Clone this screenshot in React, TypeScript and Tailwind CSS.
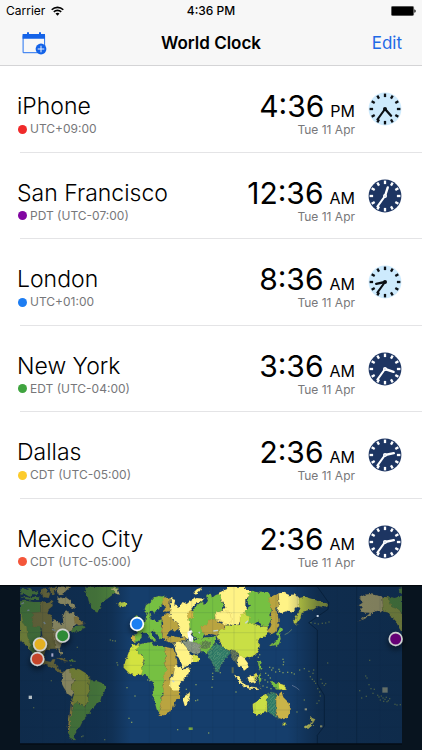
import React from "react";

type City = {
  name: string;
  zone: string;
  time: string;
  period: "AM" | "PM";
  dot: string;
  day: boolean;
};

const cities: City[] = [
  { name: "iPhone", zone: "UTC+09:00", time: "4:36", period: "PM", dot: "bg-[#f02a2a]", day: true },
  { name: "San Francisco", zone: "PDT (UTC-07:00)", time: "12:36", period: "AM", dot: "bg-[#8206a2]", day: false },
  { name: "London", zone: "UTC+01:00", time: "8:36", period: "AM", dot: "bg-[#1d7df2]", day: true },
  { name: "New York", zone: "EDT (UTC-04:00)", time: "3:36", period: "AM", dot: "bg-[#3fa43f]", day: false },
  { name: "Dallas", zone: "CDT (UTC-05:00)", time: "2:36", period: "AM", dot: "bg-[#fccb2c]", day: false },
  { name: "Mexico City", zone: "CDT (UTC-05:00)", time: "2:36", period: "AM", dot: "bg-[#f4563a]", day: false },
];

const ticks = Array.from({ length: 12 }, (_, i) => i * 30);

function Clock({ time, day }: { time: string; day: boolean }) {
  const [h, m] = time.split(":").map(Number);
  const ink = day ? "#0b0f14" : "#ffffff";
  return (
    <svg viewBox="-17 -17 34 34" className="h-[34px] w-[34px] shrink-0" aria-hidden="true">
      <circle r="16.4" fill={day ? "#cdeafd" : "#1d3562"} />
      {ticks.map((a) => (
        <line key={a} y1="-15.4" y2="-11.9" stroke={ink} strokeWidth="2.3" transform={`rotate(${a})`} />
      ))}
      <line y1="0" y2="-9" stroke={ink} strokeWidth="2.4" strokeLinecap="round" transform={`rotate(${(h % 12) * 30 + m / 2})`} />
      <line y1="0" y2="-13" stroke={ink} strokeWidth="2.1" strokeLinecap="round" transform={`rotate(${m * 6})`} />
      <circle r="2" fill={ink} />
      <circle r="0.6" fill={day ? "#0b0f14" : "#8fa0bd"} />
    </svg>
  );
}

// Land areas: [fill, outline]
const land: [string, string][] = [
  // North America
  ["#6fb545", "M60 64 L78 62 100 66 122 66 122 200 132 218 130 238 120 250 104 232 92 214 82 196 70 190 60 160Z"],
  ["#c9d845", "M60 98 L66 110 70 128 80 140 82 168 88 186 92 210 76 192 64 184 60 168Z"],
  ["#6fb545", "M60 30 L70 24 78 30 90 26 96 34 112 32 118 40 112 46 98 42 88 50 74 42 62 44Z"],
  ["#6fb545", "M62 48 L74 50 88 54 100 50 118 52 116 60 98 60 78 58Z"],
  ["#ac9f44", "M122 66 L156 62 158 78 146 88 142 104 156 110 158 144 168 150 168 206 152 206 136 212 130 228 136 242 152 246 158 238 166 238 162 250 172 254 176 268 190 276 186 280 170 274 158 262 140 256 122 250 100 236 110 200 128 176 124 142 98 140 98 98 122 96Z"],
  ["#f0df8c", "M172 66 L172 52 184 56 196 50 212 62 224 74 228 86 212 80 200 74 190 72 182 72Z"],
  ["#f0df8c", "M162 118 L176 124 184 136 190 126 188 112 194 96 204 94 212 100 220 96 226 106 236 112 240 124 222 138 216 150 206 156 198 172 186 190 180 204 188 222 182 224 174 206 166 204 162 150 156 144Z"],
  ["#d9b94e", "M222 110 L234 112 242 122 254 132 236 136 224 128Z"],
  ["#6fb545", "M214 148 L228 138 244 136 260 142 248 146 240 156 228 154 218 158Z"],
  ["#e7d57f", "M172 20 L214 20 204 30 194 32 190 44 178 46 172 40Z"],
  ["#ac9f44", "M124 28 L138 24 144 30 138 36 150 42 146 54 134 52 124 46Z"],
  ["#ac9f44", "M148 22 L168 20 168 34 158 32 164 44 154 42 150 32Z"],
  ["#6fb545", "M256 20 L356 20 348 32 338 44 322 56 306 66 300 80 292 98 282 92 272 78 266 62 262 46 256 36Z"],
  ["#e7e78a", "M334 28 L344 22 356 26 352 34 356 44 346 40 340 42 344 34Z"],
  ["#c9e04a", "M352 72 L362 68 374 66 382 72 376 80 360 82Z"],
  // Caribbean
  ["#ac9f44", "M172 234 L186 234 204 244 196 244 182 239Z"],
  ["#6fb545", "M202 240 L216 240 226 244 214 247Z"],
  // South America
  ["#efdf8a", "M200 268 L212 266 222 276 218 290 224 304 216 318 220 336 216 350 204 342 192 324 184 308 186 290 192 276Z"],
  ["#c2cc3c", "M206 268 L218 264 238 268 258 280 270 296 266 314 270 332 262 346 264 366 252 382 242 370 230 368 220 384 216 362 222 342 216 326 218 312 224 302 216 290Z"],
  ["#6fb545", "M268 290 L272 300 288 302 304 308 318 320 312 338 304 350 300 366 286 376 276 388 266 402 256 412 248 424 240 440 230 450 226 462 220 470 228 480 216 480 206 468 204 446 210 416 214 390 222 372 232 366 246 374 254 382 264 366 262 346 270 332 266 312Z"],
  ["#e0c94e", "M214 362 L218 370 213 400 209 440 207 460 203 446 208 410Z"],
  // Europe
  ["#76c043", "M438 112 L444 100 434 88 438 76 452 66 464 52 478 48 494 50 490 68 478 80 476 96 466 104 458 92 448 96 450 106 456 120 470 124 486 118 484 132 488 146 486 164 490 172 478 178 472 162 460 152 452 156 462 172 468 180 458 184 448 168 438 158 426 160 424 174 414 184 400 186 398 168 410 166 414 154 404 146 416 142 424 128 436 122Z"],
  ["#76c043", "M406 106 L414 108 418 124 424 138 408 142 404 128Z"],
  ["#d2b746", "M396 166 L404 168 403 186 396 184Z"],
  ["#b9a440", "M486 56 L500 50 510 56 508 76 512 92 500 96 492 92 498 78 488 72Z"],
  ["#b9a440", "M484 112 L498 100 510 106 516 118 528 128 540 138 534 150 522 158 508 156 500 166 506 176 494 180 488 172 486 150 490 130Z"],
  ["#b9a440", "M502 176 L516 168 536 172 554 170 558 178 550 184 530 186 512 188 504 184Z"],
  ["#fff386", "M510 54 L526 60 522 76 538 80 548 66 560 72 570 64 590 54 614 56 610 66 594 66 582 76 570 92 566 112 572 130 568 150 574 166 562 178 552 168 540 162 536 150 542 138 524 124 508 108 510 92 514 74Z"],
  ["#fff386", "M580 40 L590 28 606 22 600 32 588 44Z"],
  // Asia
  ["#76c043", "M560 98 L580 92 588 78 604 66 616 74 624 62 618 46 632 38 636 54 646 46 662 40 662 62 670 78 668 90 650 98 644 112 654 124 636 136 624 150 616 156 608 172 590 178 578 166 570 146 566 120Z"],
  ["#d2b746", "M558 98 L576 94 580 102 578 114 564 114Z"],
  ["#fff386", "M656 38 L680 28 684 20 734 20 738 30 752 30 746 50 736 58 736 80 742 92 724 112 716 134 700 136 684 130 672 138 664 126 652 122 644 110 652 98 668 92 676 82 666 64Z"],
  ["#fff386", "M644 100 L664 92 690 98 694 120 690 138 668 124 648 118Z"],
  ["#b9a440", "M602 142 L620 136 628 120 644 118 660 128 674 136 672 150 656 154 652 166 630 162 616 168Z"],
  ["#76c043", "M746 40 L756 32 774 38 806 38 812 48 828 52 810 70 816 90 808 104 812 122 802 140 782 136 776 122 760 134 742 130 748 112 732 104 736 90 750 78 740 62 746 52Z"],
  ["#c9df45", "M652 170 L656 154 674 148 676 136 704 138 720 134 720 104 738 98 736 106 752 110 746 128 766 132 782 138 802 140 806 156 796 168 780 174 770 182 780 194 776 208 768 222 752 232 738 230 728 238 718 224 704 220 690 212 670 206 662 192Z"],
  ["#b9a440", "M806 52 L822 46 836 40 836 80 828 84 832 102 836 120 834 140 826 156 812 164 804 150 812 140 816 120 810 110 816 98 818 90 810 74Z"],
  ["#fff386", "M836 40 L852 38 870 46 886 42 898 54 896 68 902 80 888 86 884 96 862 92 842 100 832 92 838 72Z"],
  ["#c9d845", "M898 54 L914 50 934 56 958 64 976 70 984 76 970 82 954 78 942 88 926 90 906 96 900 118 888 134 880 130 886 112 896 98 902 82 894 72Z"],
  ["#76c043", "M556 182 L572 178 590 180 608 172 624 172 642 170 652 172 646 184 640 196 632 212 620 222 606 216 600 202 584 192Z"],
  ["#fff386", "M522 192 L532 184 548 188 560 202 570 222 580 232 592 240 576 250 550 264 544 250 534 230 526 210Z"],
  ["#d9e24a", "M576 228 L588 226 598 236 590 248 580 246 584 238Z"],
  ["#fff386", "M710 234 L722 226 734 236 744 250 740 266 732 272 724 258 714 260Z"],
  ["#76c043", "M808 196 L824 188 834 178 832 158 840 142 846 148 840 162 842 176 838 190 830 202 826 194 812 198Z"],
  // South-east Asia
  ["#fff386", "M704 282 L716 290 728 306 736 318 762 321 784 325 770 327 748 326 730 320 714 300Z"],
  ["#fff386", "M742 292 L756 288 768 280 770 292 764 306 750 310Z"],
  ["#d9e24a", "M758 288 L770 278 768 296 764 304Z"],
  ["#76c043", "M776 290 L782 282 784 300 780 314 776 302Z"],
  ["#76c043", "M774 244 L782 242 780 256 788 268 782 274 776 260Z"],
  ["#76c043", "M810 306 L824 308 838 310 846 318 838 328 820 320Z"],
  ["#d9e24a", "M836 310 L850 314 860 326 846 328 836 322Z"],
  // Africa
  ["#76c043", "M418 194 L440 188 456 186 464 198 480 198 494 198 498 226 492 252 502 268 492 284 494 300 488 316 494 338 482 352 484 378 478 402 470 388 462 358 458 330 462 308 448 298 438 286 424 284 428 256 434 240 424 226 408 208Z"],
  ["#d3e33f", "M396 194 L416 192 418 202 408 210 424 228 432 240 426 256 428 270 424 284 402 286 386 278 374 266 374 248 382 228 388 212Z"],
  ["#b9a440", "M494 200 L520 206 528 222 532 248 524 266 520 284 508 292 510 316 520 330 540 332 540 350 526 364 520 382 508 398 492 406 476 404 484 380 482 354 494 342 488 318 494 300 490 282 502 268 492 252 498 226Z"],
  ["#fff386", "M526 252 L536 260 550 268 572 264 564 284 548 302 536 314 540 332 520 332 508 318 510 298 520 288Z"],
  ["#fff386", "M554 348 L568 338 570 346 562 370 554 378 550 364Z"],
  // Australia, New Zealand
  ["#c9df45", "M758 372 L772 364 784 352 802 342 802 396 784 400 768 408 760 396Z"],
  ["#c9b449", "M828 340 L838 352 844 334 850 352 864 366 872 384 872 398 862 414 848 418 836 414 828 398Z"],
  ["#c9df45", "M848 428 L858 428 854 438Z"],
  ["#eef26a", "M912 442 L924 434 934 426 940 428 930 440 918 449Z"],
  ["#eef26a", "M934 422 L930 408 938 415 946 418 940 428Z"],
  // Alaska and the Pacific coast
  ["#f0df8c", "M1078 54 L1094 44 1110 42 1148 50 1150 96 1134 92 1122 96 1110 106 1096 114 1076 124 1096 108 1108 98 1094 98 1080 90 1088 82 1076 76 1088 68Z"],
  ["#c4cf48", "M1148 50 L1164 52 1178 74 1198 88 1206 102 1206 158 1196 142 1188 124 1176 112 1166 98 1150 94Z"],
  ["#6fb545", "M1164 50 L1184 54 1206 48 1206 100 1192 84 1174 78Z"],
  ["#6fb545", "M1196 24 L1206 22 1206 42 1198 36Z"],
];

// Zones with half-hour offsets are drawn hatched.
const hatched: [string, string][] = [
  ["#84907f", "M550 184 L562 180 578 186 596 190 604 204 600 220 588 222 572 216 558 204Z"],
  ["#5a7f48", "M602 188 L618 184 634 182 630 196 618 206 604 204Z"],
  ["#2f7a66", "M626 212 L640 196 648 190 662 198 680 208 694 218 684 226 676 238 664 252 658 270 652 280 642 262 636 244 626 238Z"],
  ["#596b54", "M692 216 L700 210 712 218 714 234 706 250 698 238Z"],
  ["#2f7a66", "M802 340 L814 336 828 340 828 398 834 418 818 404 802 396Z"],
];

const lakes = [
  "M132 58 L144 56 152 66 140 70Z",
  "M504 154 L516 150 528 156 538 164 524 168 508 166Z",
  "M464 92 L478 88 480 98 470 108 464 104Z",
];

const islands: [number, number][] = [
  [330, 180], [337, 182], [345, 183], [350, 248], [352, 255], [380, 323], [404, 348], [386, 415], [394, 427],
  [153, 302], [100, 383], [231, 202], [248, 468], [244, 470], [313, 479], [224, 244], [212, 256], [397, 202],
  [442, 300], [448, 302], [532, 449], [625, 459], [558, 328], [586, 362], [592, 360], [587, 314], [637, 280],
  [637, 290], [660, 278], [635, 322], [707, 336], [637, 298], [826, 276], [838, 274], [848, 278], [862, 277],
  [874, 278], [882, 282], [898, 270], [912, 266], [926, 274], [938, 280], [940, 270], [930, 290], [936, 298],
  [942, 304], [946, 310], [962, 298], [966, 310], [972, 316], [976, 311], [952, 326], [958, 336], [960, 348],
  [956, 362], [950, 370], [982, 249], [1108, 241], [1096, 288], [1100, 294], [1106, 314], [1112, 326], [1078, 332],
  [1122, 328], [1118, 340], [1098, 349], [1084, 354], [1132, 346], [1136, 351], [1143, 348], [1148, 354], [1154, 358],
  [1158, 352], [1164, 362], [1150, 364], [1140, 360], [1184, 373], [1190, 375], [1200, 374], [1168, 356], [1160, 365],
  [848, 238], [850, 246], [849, 254], [836, 268], [912, 360], [890, 396], [932, 128], [944, 130], [954, 132],
  [966, 130], [976, 129], [986, 126], [808, 262], [814, 270], [796, 280], [804, 286], [810, 294], [794, 300],
  [800, 322], [788, 318], [812, 326], [818, 264], [802, 306], [774, 232], [778, 224],
];

const pins: [number, number, string][] = [
  [120, 193, "#e4b020"],
  [112, 237, "#c5442c"],
  [188, 167, "#2f8a35"],
  [411, 132, "#1f7ff2"],
  [1187, 177, "#650674"],
];

function WorldMap() {
  return (
    <svg viewBox="0 15 1266 495" className="block w-full" role="img" aria-label="World time zone map">
      <defs>
        <linearGradient id="night" gradientUnits="userSpaceOnUse" x1="60" y1="0" x2="1206" y2="0">
          <stop offset="0" stopColor="#08182a" stopOpacity="0.5" />
          <stop offset="0.2" stopColor="#08182a" stopOpacity="0.44" />
          <stop offset="0.24" stopColor="#08182a" stopOpacity="0.36" />
          <stop offset="0.29" stopColor="#08182a" stopOpacity="0" />
          <stop offset="0.7" stopColor="#08182a" stopOpacity="0" />
          <stop offset="0.78" stopColor="#08182a" stopOpacity="0.46" />
          <stop offset="1" stopColor="#08182a" stopOpacity="0.5" />
        </linearGradient>
        <pattern id="hatch" width="7" height="7" patternUnits="userSpaceOnUse" patternTransform="rotate(45)">
          <rect width="2" height="7" fill="#b9d49a" opacity="0.25" />
        </pattern>
        <filter id="coast" filterUnits="userSpaceOnUse" x="50" y="10" width="1166" height="490">
          <feTurbulence type="fractalNoise" baseFrequency="0.09" numOctaves="2" seed="4" />
          <feDisplacementMap in="SourceGraphic" scale="12" xChannelSelector="R" yChannelSelector="G" />
        </filter>
        <filter id="shade" x="-60%" y="-60%" width="220%" height="240%">
          <feDropShadow dx="0" dy="9" stdDeviation="10" floodColor="#000" floodOpacity="0.6" />
        </filter>
        <clipPath id="frame">
          <rect x="60" y="20" width="1146" height="472" />
        </clipPath>
      </defs>
      <rect y="15" width="1266" height="495" fill="#08141f" />
      <g clipPath="url(#frame)">
        <rect x="60" y="20" width="1146" height="472" fill="#153e6c" />
        <g filter="url(#coast)">
          {land.map(([fill, d]) => (
            <path key={d} d={d} fill={fill} stroke="#a5752c" strokeOpacity="0.35" strokeWidth="1.5" />
          ))}
          {hatched.map(([fill, d]) => (
            <g key={d}>
              <path d={d} fill={fill} stroke="#5c6140" strokeOpacity="0.6" strokeWidth="1.5" />
              <path d={d} fill="url(#hatch)" />
            </g>
          ))}
          {lakes.map((d) => (
            <path key={d} d={d} fill="#153e6c" />
          ))}
        </g>
        <path d="M562 156 L574 150 578 156 570 162 580 172 578 186 568 184 564 170Z" fill="#fff" />
        <path d="M695 262 h6 v18 h-6Z" fill="#596b54" />
        <path d="M64 72 l8 -4 M82 92 l6 -2 M131 126 l5 6 M156 148 l10 4 M517 302 l6 4 M736 130 l8 -8 M596 156 l4 4 M640 153 l14 -2" stroke="#c4d6d6" strokeWidth="4" />
        <rect x="566" y="442" width="12" height="8" fill="#7ca741" />
        {islands.map(([x, y]) => (
          <rect key={`${x}-${y}`} x={x - 1} y={y - 2} width="4" height="4" fill="#9fb55c" opacity="0.75" />
        ))}
        <path d="M854 164 q12 -4 22 -16" stroke="#7d9a6a" strokeWidth="2" fill="none" />
        <path d="M876 316 l12 6 10 8" stroke="#5c7599" strokeWidth="3" fill="none" />
        <path
          d="M128 20V492 M196 20V492 M256 20V492 M320 20V492 M448 20V492 M512 20V492 M575 20V492 M638 20V492 M702 20V492 M765 20V492 M828 20V492 M892 20V492 M1012 20V492 M1140 20V492 M60 98H1206 M60 158H1206 M60 210H1206 M60 256H1206 M60 302H1206 M60 346H1206 M60 390H1206 M60 442H1206"
          stroke="#102c4d"
          strokeOpacity="0.16"
          strokeWidth="2"
        />
        <rect x="60" y="20" width="1146" height="472" fill="url(#night)" />
        <path d="M952 20 L986 68 984 88 926 128 952 150 V312 L973 346 V438 L952 466 V492" fill="none" stroke="#08213c" strokeWidth="3" />
        <path d="M1070 20V492" stroke="#0b2542" strokeWidth="3" />
        <rect x="86" y="347" width="10" height="10" fill="#b4bdc2" />
        <rect x="154" y="220" width="6" height="10" fill="#a7a7c9" />
        <rect x="950" y="105" width="6" height="6" fill="#c3d0df" />
        <rect x="1147" y="322" width="16" height="16" fill="#626d67" />
        <rect x="914" y="385" width="7" height="6" fill="#8b8e79" />
        <rect x="960" y="436" width="7" height="6" fill="#7b8061" />
      </g>
      <path d="M60 492H1206" stroke="#040c16" strokeWidth="4" />
      <path d="M0 17H1266" stroke="#03080e" strokeWidth="4" />
      {pins.map(([x, y, fill]) => (
        <circle key={fill} cx={x} cy={y} r="19" fill={fill} stroke={fill === "#1f7ff2" ? "#fff" : "#d0d2d2"} strokeWidth="5" filter="url(#shade)" />
      ))}
    </svg>
  );
}

export default function App() {
  return (
    <div className="flex min-h-screen flex-col bg-white font-['Inter','Liberation_Sans',sans-serif] text-black">
      <header className="border-b border-[#d4d4d6] bg-[#f7f7f7]">
        <div className="grid h-5 grid-cols-3 items-center px-1.5 pt-0.5 text-[12px] leading-4">
          <div className="flex items-center gap-1.5">
            <span>Carrier</span>
            <svg viewBox="0 0 13 10" className="h-[10px] w-[13px]" aria-label="Wi-Fi">
              <g fill="none" stroke="#000" strokeWidth="1.6">
                <path d="M0.7 3.7a8.3 8.3 0 0 1 11.6 0" />
                <path d="M2.8 5.9a5.3 5.3 0 0 1 7.4 0" />
              </g>
              <path d="M4.5 7.6a3 3 0 0 1 4 0L6.5 9.7Z" />
            </svg>
          </div>
          <span className="text-center font-medium">4:36 PM</span>
          <svg viewBox="0 0 25 10" className="h-[10px] w-[25px] justify-self-end" aria-label="Battery full">
            <rect x="0.3" y="0.3" width="22.4" height="9.4" rx="1.4" fill="#000" stroke="#777" strokeWidth="0.5" />
            <path d="M23.4 3.2v3.6q1.3-.4 1.3-1.8t-1.3-1.8Z" />
          </svg>
        </div>
        <div className="grid h-[45px] grid-cols-3 items-center px-5">
          <button type="button" aria-label="Add to calendar" className="justify-self-start">
            <svg viewBox="0 0 28 24" className="h-6 w-7" aria-hidden="true">
              <path d="M3.1 4.5V21.7H24.6V4.5" fill="none" stroke="#2472f0" strokeWidth="1" />
              <path d="M2.6 3H7V1.2h2V3h10V1.2h2V3h4V7.8H2.6Z" fill="#1463e8" />
              <circle cx="21" cy="18" r="5.4" fill="#1463e8" />
              <path d="M21 14.7v6.6M17.7 18h6.6" stroke="#e8f1ff" strokeWidth="1" />
            </svg>
          </button>
          <h1 className="text-center text-[17px] leading-6 font-semibold whitespace-nowrap">World Clock</h1>
          <button type="button" className="justify-self-end text-[17px] leading-6 text-[#1e6ae6]">
            Edit
          </button>
        </div>
      </header>

      <ul className="flex flex-1 flex-col">
        {cities.map((c) => (
          <li key={c.name} className="group flex min-h-[86px] flex-1 pl-5">
            <div className="flex flex-1 items-start border-b border-[#e4e4e6] pt-[26px] pr-5 group-last:border-b-0">
              <div className="-ml-[3px] min-w-0 flex-1">
                <h2 className="truncate text-[23px] leading-7 font-light">{c.name}</h2>
                <p className="flex items-center gap-[3px] pt-px text-[12px] leading-4 text-[#77777a]">
                  <span className={`ml-px size-[9px] rounded-full ${c.dot}`} />
                  {c.zone}
                </p>
              </div>
              <div className="mr-[13px] text-right">
                <p className="flex items-baseline justify-end gap-1.5">
                  <time className="text-[30px] leading-7">{c.time}</time>
                  <span className="text-[16px] leading-4">{c.period}</span>
                </p>
                <p className="pt-0.5 text-[12px] leading-4 text-[#77777a]">Tue 11 Apr</p>
              </div>
              <Clock time={c.time} day={c.day} />
            </div>
          </li>
        ))}
      </ul>

      <WorldMap />
    </div>
  );
}
